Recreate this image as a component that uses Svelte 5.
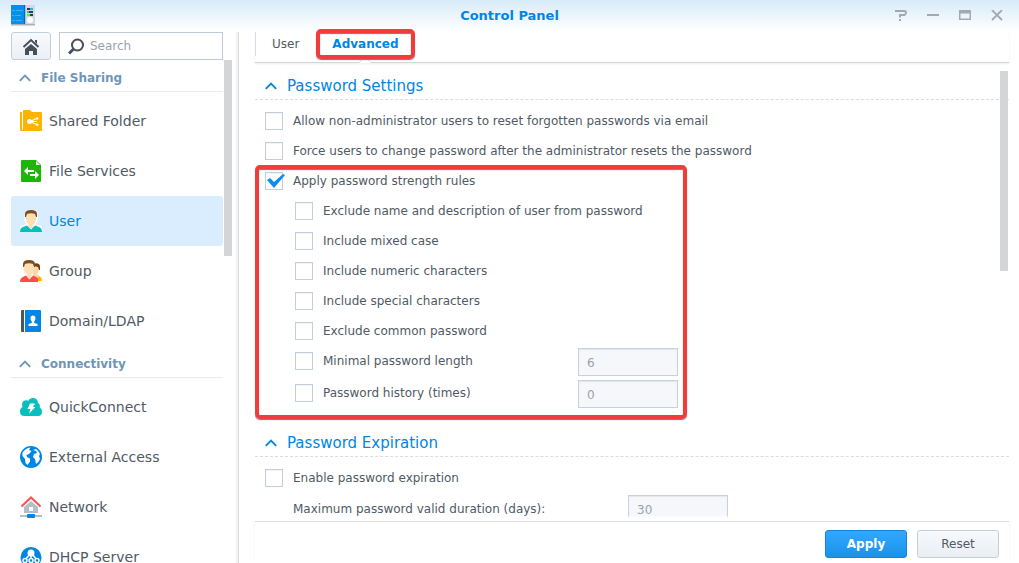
<script>
  const groups = [
    {
      title: 'File Sharing',
      items: [
        { icon: 'folder', label: 'Shared Folder' },
        { icon: 'services', label: 'File Services' },
        { icon: 'user', label: 'User' },
        { icon: 'group', label: 'Group' },
        { icon: 'domain', label: 'Domain/LDAP' }
      ]
    },
    {
      title: 'Connectivity',
      items: [
        { icon: 'quick', label: 'QuickConnect' },
        { icon: 'external', label: 'External Access' },
        { icon: 'network', label: 'Network' },
        { icon: 'dhcp', label: 'DHCP Server' }
      ]
    }
  ];
  const rules = [
    'Exclude name and description of user from password',
    'Include mixed case',
    'Include numeric characters',
    'Include special characters',
    'Exclude common password'
  ];
  let current = $state('User');
  let strength = $state(true);
</script>

{#snippet chevron()}
  <svg class="chevron" width="12" height="8" viewBox="0 0 12 8" aria-hidden="true">
    <path d="M.8 6.8 6 1.6l5.2 5.2" fill="none" stroke="currentColor" stroke-width="1.9" />
  </svg>
{/snippet}

{#snippet itemIcon(name)}
  <svg width="22" height="22" viewBox="0 0 22 22" aria-hidden="true">
    {#if name === 'folder'}
      <path fill="#ffb300" d="M0 2h2v17.500h1V1q0-1 1-1h6l2 2h9q1 0 1 1v17q0 1-1 1H1q-1 0-1-1z" />
      <path stroke="#fff" stroke-width="1.200" d="M17.500 8 10 11.500l7.500 3.500M10 11.500h7" fill="none" />
      <circle cx="9.500" cy="11.500" r="2.500" fill="#fff" />
      <circle cx="17.200" cy="8.500" r="1.200" fill="#fff" /><circle cx="17.200" cy="14.700" r="1.200" fill="#fff" />
    {:else if name === 'services'}
      <path fill="#1fb40a" d="M2 0h14l5 5v16q0 1-1 1H2q-1 0-1-1V1q0-1 1-1z" />
      <path fill="#fff" d="M16 1v4h4zM4 11l4-4v3h6v2H8v3zM19 15l-4-4v3H10v2h5v3z" />
    {:else if name === 'user'}
      <path fill="#fff" d="M5 5q0-6 6-6 7 0 7 6v4l-2 5 6 2q2 2 1 7H-1q-1-5 1-7l6-2-2-5z" />
      <path fill="#05bfbd" d="M0 22q0-4 3-5l4-1.500 4 4 4-4 4 1.500q3 1 3 5z" />
      <path fill="#ffdfb3" d="M6 5q0-4 5-4t5 4v4q0 4-2.500 5v2.500L11 19l-2.500-2.500V14Q6 13 6 9z" />
      <path fill="#7c5027" d="M5 7V4q0-4 6-4 6 0 6 4v3h-1l-1-3q-4-1.500-8 0L6 7z" />
    {:else if name === 'group'}
      <path fill="#ffb300" d="m16 15 4 1.500q2 1 2 4.500h-5z" />
      <path fill="#ffd6a3" d="M13 5q6-1 6 3 0 4-2 6l2 2-2 4-4-5z" />
      <path fill="#6b401b" d="M13 4q6-2 7 2v4h-1l-1-3-4-1z" />
      <path fill="#ff4b4b" d="M0 22q0-4 3-5l3-1.500 3.500 4 3.500-4 3 1.500q3 1 2 5z" />
      <path fill="#ffdfb3" d="M4 5q0-4 5-4t5 4v4q0 4-2.500 5v2.500L9 19l-2-2.500V14Q4 13 4 9z" />
      <path fill="#7c5027" d="M3 7V4q0-4 6-4 6 0 6 4v3h-1l-1-3q-4-1.500-8 0L4 7z" />
    {:else if name === 'domain'}
      <path fill="#4c5661" d="M2 0h2v22H2q-1 0-1-1V1q0-1 1-1z" />
      <path fill="#0086e5" d="M5 0h15q1 0 1 1v20q0 1-1 1H5z" />
      <path fill="#fff" d="M10.500 8q0-2.500 2.500-2.500T15.500 8q0 2.500-1.300 3.500v1.500l3.300 1v2h-9v-2l3.300-1v-1.500Q10.500 10.500 10.500 8z" />
    {:else if name === 'quick'}
      <path fill="#07c0be" d="M4.500 20Q0 20 0 15.500 0 12 2.500 11 1 6 4.500 4.500q2-.8 4 .3Q9.500 2 13 2q4.500 0 5 5 2.500 1.500 1.800 4.500 2.200 1 2.200 4Q22 20 18 20z" />
      <path fill="#fff" d="M10 7.500h5L13 11h2.500L9 17.500l1.500-4.500h-3z" />
    {:else if name === 'external'}
      <circle cx="11" cy="11" r="11" fill="#0086e5" />
      <path fill="#fff" d="M2.500 6.500Q6 2 10.500 1.500L9 4l2.500 1L9 8l-2.500 1 .5 2 3 1.500v3L7.500 19l-2-2-.5-4L2.500 10zM13 4l3-1q3 2 4 5l-1 2 1 3q-1 3-4 5l-1-5-2-2 1-3 3-1-1-2z" />
    {:else if name === 'network'}
      <path fill="#b3becb" d="m11 5 7 6v6H4v-6z" />
      <path fill="#fff" d="M9 11h4v4H9z" />
      <path d="M1.500 10.500 11 1.500l9.500 9" fill="none" stroke="#ff5050" stroke-width="2" />
      <path fill="#b3becb" d="M0 19h22v2H0z" />
      <rect x="7" y="18" width="8" height="4" rx="1" fill="#0086e5" />
    {:else if name === 'dhcp'}
      <circle cx="11" cy="11.500" r="10.500" fill="#0086e5" />
      <circle cx="11" cy="7" r="3.500" fill="#fff" />
      <path d="M10 8 5 14m7-6 5 6m-6-6v6" stroke="#fff" stroke-width="1.500" />
      <g fill="#0086e5" stroke="#fff" stroke-width="1.500"><circle cx="5" cy="14.500" r="2" /><circle cx="11" cy="14.500" r="2" /><circle cx="17" cy="14.500" r="2" /></g>
    {/if}
  </svg>
{/snippet}

<div class="window">
  <header>
    <svg class="logo" width="24" height="22" viewBox="0 0 24 22" aria-hidden="true">
      <path fill="#a9b0b8" d="M0 19h24v1.500H0z" />
      <path fill="#0a8fe8" d="M0 0h14v19H0z" /><path fill="#0569b5" d="M13 0h1.500v19H13z" />
      <path fill="#d3d9df" d="M14.500 0H24v19h-9.500z" />
      <path stroke="#33b5ef" d="M1 5.500h3M5 5.500h7M1 10.500h2M4 10.500h6M1 15.500h3M5 15.500h6" />
      <path stroke="#333b43" stroke-width="2" d="M16 4h6M16 7h6M16 10h6" />
      <path stroke="#18b8f0" stroke-width="2" d="M19 4h3M16 7h2" /><path stroke="#8bdc13" stroke-width="2" d="M16 10h3" />
      <circle cx="19" cy="15" r="3" fill="#fff" />
    </svg>
    <h1>Control Panel</h1>
    <div class="controls">
      <button aria-label="Help"><svg width="12" height="11" viewBox="0 0 12 11"><path d="M0 1h9.500q1.500 0 1.500 1.500T9.500 5H5v2.500M5 9v2" fill="none" stroke="currentColor" stroke-width="2" /></svg></button>
      <button aria-label="Minimize"><svg width="12" height="11" viewBox="0 0 12 11"><path d="M0 5h12" stroke="currentColor" stroke-width="2" /></svg></button>
      <button aria-label="Maximize"><svg width="12" height="11" viewBox="0 0 12 11"><path d="M0 0h12v10H0zM1.500 3.500v5h9v-5z" fill="currentColor" fill-rule="evenodd" /></svg></button>
      <button aria-label="Close"><svg width="12" height="11" viewBox="0 0 12 11"><path d="m1 0 10 10M11 0 1 10" stroke="currentColor" stroke-width="1.800" /></svg></button>
    </div>
  </header>

  <div class="body">
    <aside>
      <div class="tools">
        <button class="home" aria-label="Home">
          <svg width="18" height="17" viewBox="0 0 18 17"><path fill="#464f5a" d="m9 6 6 5v6h-4v-4H7v4H3v-6z" /><path d="M1.500 9 9 2l7.500 7" fill="none" stroke="#464f5a" stroke-width="2" /><path fill="#464f5a" d="M13 2h2v4l-2-2z" /></svg>
        </button>
        <label class="search">
          <svg width="17" height="17" viewBox="0 0 17 17" aria-hidden="true"><circle cx="9.500" cy="7" r="5.500" fill="none" stroke="#464f5a" stroke-width="2" /><path d="m5.500 11-4.500 4.500" stroke="#464f5a" stroke-width="3" /></svg>
          <input type="text" placeholder="Search" aria-label="Search" />
        </label>
      </div>
      <div class="list">
        <nav>
          {#each groups as g}
            <h2>{@render chevron()}{g.title}</h2>
            <ul>
              {#each g.items as it}
                <li>
                  <button class:selected={current === it.label} onclick={() => (current = it.label)}>
                    {@render itemIcon(it.icon)}{it.label}
                  </button>
                </li>
              {/each}
            </ul>
          {/each}
        </nav>
        <div class="thumb"></div>
      </div>
    </aside>

    <main>
      <div class="tabs">
        <button>User</button>
        <button class="active">
          Advanced
          <svg class="notch" width="14" height="7" viewBox="0 0 14 7" aria-hidden="true"><path d="M0 6.500h1L7 .5l6 6h1V7H0z" fill="#fff" /><path d="M0 6.500h1L7 .5l6 6h1" fill="none" stroke="#cfd2d5" /></svg>
          <span class="mark"></span>
        </button>
      </div>
      <div class="pane">
        <form>
          <h3>{@render chevron()}Password Settings</h3>
          <section>
            <label class="row"><input type="checkbox" />Allow non-administrator users to reset forgotten passwords via email</label>
            <label class="row"><input type="checkbox" />Force users to change password after the administrator resets the password</label>
            <div class="rules">
              <label class="row"><input type="checkbox" bind:checked={strength} />Apply password strength rules</label>
              {#each rules as r}
                <label class="row sub"><input type="checkbox" />{r}</label>
              {/each}
              <div class="pair">
                <label class="row sub"><input type="checkbox" />Minimal password length</label>
                <input class="num" type="text" value="6" disabled aria-label="Minimal password length" />
              </div>
              <div class="pair">
                <label class="row sub"><input type="checkbox" />Password history (times)</label>
                <input class="num" type="text" value="0" disabled aria-label="Password history (times)" />
              </div>
              <span class="frame"></span>
            </div>
          </section>
          <h3>{@render chevron()}Password Expiration</h3>
          <section>
            <label class="row"><input type="checkbox" />Enable password expiration</label>
            <div class="pair wide">
              <label class="row plain" for="maxdays">Maximum password valid duration (days):</label>
              <input class="num" id="maxdays" type="text" value="30" disabled />
            </div>
          </section>
        </form>
        <div class="thumb"></div>
      </div>
      <footer>
        <button class="primary">Apply</button>
        <button>Reset</button>
      </footer>
    </main>
  </div>
</div>

<style>
  :global(body) { margin: 0; background: #fff; }
  * { box-sizing: border-box; }
  h1, h2, h3, ul { margin: 0; padding: 0; list-style: none; }
  button, input { font: inherit; color: inherit; margin: 0; }
  button { padding: 0; border: 0; background: none; cursor: pointer; }
  svg { display: block; flex: none; }

  .window {
    display: flex;
    flex-direction: column;
    height: 100vh;
    overflow: hidden;
    font: 12px/18px Verdana, "DejaVu Sans", sans-serif;
    color: #505a64;
    background: linear-gradient(#d8ebf9, #fff 32px);
  }
  header {
    display: grid;
    grid-template-columns: 1fr auto 1fr;
    align-items: center;
    height: 32px;
    flex: none;
    padding: 0 11px;
  }
  h1 { font-size: 13px; color: #0086e5; }
  .controls { display: flex; justify-content: flex-end; gap: 20px; padding: 0 5px 2px 0; color: #a2a9b2; }

  .body { display: flex; flex: 1; min-height: 0; }
  aside {
    display: flex;
    flex-direction: column;
    flex: none;
    width: 239px;
    padding-left: 11px;
    border-right: 1px solid #d9dadc;
    box-shadow: inset -2px 0 1px #f2f3f4;
  }
  .tools { display: flex; gap: 8px; flex: none; padding-right: 15px; }
  .home {
    display: grid;
    place-items: center;
    width: 40px;
    height: 28px;
    border: 1px solid #c4cfdc;
    border-radius: 3px;
    background: linear-gradient(#f7faff, #eaf0f5);
  }
  .search {
    display: flex;
    align-items: center;
    gap: 5px;
    flex: 1;
    min-width: 0;
    padding-left: 8px;
    border: 1px solid #c0cbd7;
    background: #fff;
  }
  .search input { width: 100%; min-width: 0; padding: 0; border: 0; outline: 0; background: none; font-size: 12px; }
  .search input::placeholder { color: #9ba2aa; opacity: 1; }

  .list { display: flex; flex: 1; gap: 1px; min-height: 0; overflow: hidden; }
  nav { width: 212px; }
  h2 {
    display: flex;
    align-items: center;
    gap: 10px;
    height: 32px;
    padding: 4px 0 0 8px;
    border-bottom: 1px solid #e9ebed;
    font-size: 12px;
    color: #6e96b8;
  }
  ul { padding-top: 4px; }
  li button {
    display: flex;
    align-items: center;
    gap: 7px;
    width: 100%;
    height: 50px;
    padding-left: 9px;
    border-radius: 3px;
    font-size: 14px;
  }
  li .selected { background: #d9edff; color: #0086e5; }
  .thumb { width: 8px; flex: none; background: #d4d5d7; }
  .list .thumb { height: 196px; }

  main { display: flex; flex-direction: column; flex: 1; min-width: 0; padding: 0 10px 0 16px; background: #fff; }
  .tabs {
    display: flex;
    flex: none;
    height: 31px;
    border-bottom: 1px solid #d3d5d7;
    box-shadow: 0 1px 2px #eceeef;
  }
  .tabs button { position: relative; height: 24px; padding: 0 16px; border-left: 1px solid #d5dce3; }
  .tabs .active { border-color: transparent; color: #0086e5; font-weight: bold; }
  .notch { position: absolute; left: calc(50% - 7px); top: 100%; }
  .mark {
    position: absolute;
    z-index: 1;
    inset: -3px 0;
    border: 4px solid #f23b3b;
    border-radius: 5px;
    box-shadow: 0 1px 1px #777, inset 0 1px 1px #777;
  }

  .pane { position: relative; display: flex; flex: 1; min-height: 0; overflow: hidden; padding-top: 9px; }
  form { flex: 1; min-width: 0; }
  .pane .thumb { position: absolute; top: 8px; right: 1px; height: 200px; }
  .pane::after {
    content: "";
    position: absolute;
    inset: auto 0 0;
    height: 6px;
    background: linear-gradient(transparent, #fff 50%);
  }
  h3 {
    display: flex;
    align-items: center;
    gap: 10px;
    height: 28px;
    padding-left: 10px;
    border-bottom: 1px dashed #d5dde6;
    font-size: 15px;
    font-weight: normal;
    color: #0086e5;
  }
  section { padding: 6px 0 19px 10px; }
  .row { display: flex; align-items: center; gap: 10px; height: 30px; white-space: nowrap; }
  .sub { padding-left: 30px; }
  .plain { height: 32px; padding-left: 28px; }
  input[type="checkbox"] {
    appearance: none;
    position: relative;
    flex: none;
    width: 18px;
    height: 18px;
    border: 1px solid #c3ceda;
    background: #fff;
    box-shadow: inset 0 1px 1px #f0f2f4;
  }
  input[type="checkbox"]:checked::before {
    content: "";
    position: absolute;
    inset: -1px -3px -1px -1px;
    background: #0a8cf0;
    clip-path: polygon(2px 8px, 5px 6px, 9px 10px, 18px 2px, 20px 3px, 9px 16px);
  }
  .rules { position: relative; }
  .frame {
    position: absolute;
    inset: -1px auto -9px -10px;
    width: 432px;
    border: 4px solid #f23b3b;
    border-radius: 5px;
    box-shadow: 0 1px 1px #777, inset 0 1px 1px #777;
    pointer-events: none;
  }
  .pair { display: grid; grid-template-columns: 313px 100px; height: 32px; align-items: start; }
  .wide { grid-template-columns: 363px 100px; }
  .num {
    width: 100px;
    height: 28px;
    margin-top: 2px;
    padding: 2px 8px 0;
    border: 1px solid #c6d1dd;
    background: #f5f7fa;
    box-shadow: inset 0 1px 1px #e3e7ea;
    color: #9aa2ab;
  }

  footer {
    display: flex;
    flex: none;
    justify-content: flex-end;
    gap: 10px;
    padding: 8px 10px 5px;
    border-top: 1px solid #dadcde;
    box-shadow: 0 -1px 2px #eceeef;
  }
  footer button {
    width: 82px;
    height: 28px;
    border: 1px solid #c3cfdc;
    border-radius: 3px;
    background: linear-gradient(#f6faff, #e9eef3);
  }
  footer .primary { border-color: #1483d8; background: linear-gradient(#32a8ff, #1a92ea); color: #fff; font-weight: bold; }
</style>
